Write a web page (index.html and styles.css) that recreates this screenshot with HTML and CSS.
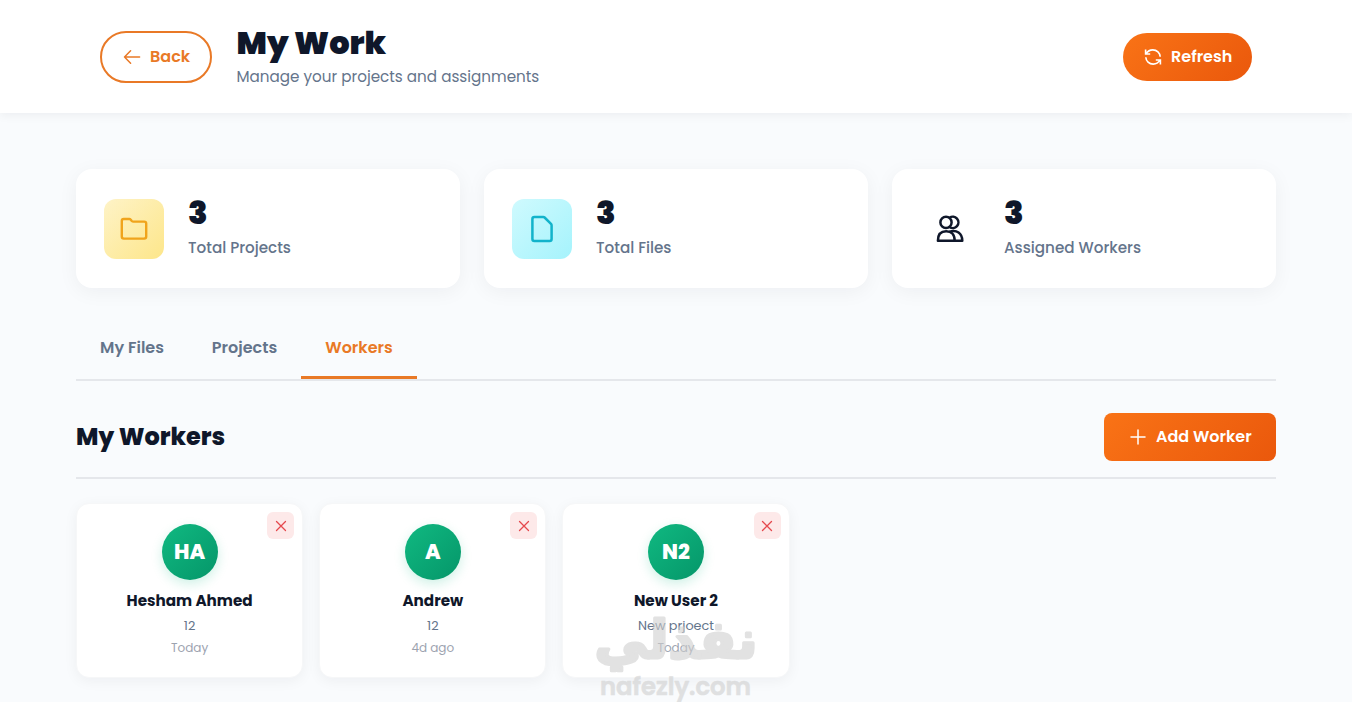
FILE: index.html
```html
<!DOCTYPE html>
<html lang="en">
<head>
  <meta charset="UTF-8">
  <meta name="viewport" content="width=device-width, initial-scale=1.0">
  <title>My Work</title>
  <link rel="stylesheet" href="styles.css">
</head>
<body>
  <header class="page-header">
    <div class="header-content">
      <div class="header-left">
        <button class="back-btn">
          <svg width="20" height="20" viewBox="0 0 20 20" fill="none" stroke="currentColor" stroke-width="1.5" stroke-linecap="round" stroke-linejoin="round"><path d="M17.6 10H2.5M8.6 3.7L2.5 10L8.6 16.3"/></svg>
          <span>Back</span>
        </button>
        <div class="header-title">
          <h1>My Work</h1>
          <p>Manage your projects and assignments</p>
        </div>
      </div>
      <button class="refresh-btn">
        <svg width="18" height="18" viewBox="0 0 18 18" fill="none" stroke="currentColor" stroke-width="1.6"><path d="M1.6 1.5V6H6.2M2 5.8C3.6 3.2 6 1.9 8.8 1.9C12.9 1.9 16 5 16.2 8.8M16.4 16.5V12H11.8M16 12.2C14.4 14.8 12 16.1 9.2 16.1C5.1 16.1 2 13 1.8 9.2"/></svg>
        <span>Refresh</span>
      </button>
    </div>
  </header>

  <main class="container">
    <section class="stats">
      <div class="stat-card">
        <div class="stat-icon projects">
          <svg width="32" height="32" viewBox="0 0 32 32" fill="none" stroke="currentColor" stroke-width="2.4" stroke-linejoin="round"><path d="M5.6 6H11.2Q12.1 6 12.8 6.8L13.8 8Q14.4 8.6 15.4 8.6H26.2Q28.2 8.6 28.2 10.6V23.6Q28.2 25.6 26.2 25.6H5.8Q3.8 25.6 3.8 23.6V8Q3.8 6 5.6 6Z"/></svg>
        </div>
        <div class="stat-info">
          <h3>3</h3>
          <p>Total Projects</p>
        </div>
      </div>
      <div class="stat-card">
        <div class="stat-icon files">
          <svg width="32" height="32" viewBox="0 0 32 32" fill="none" stroke="currentColor" stroke-width="2.5" stroke-linejoin="round"><path d="M8.4 3.9H17.2Q18 3.9 18.6 4.5L25 10.9Q25.6 11.5 25.6 12.4V25.9Q25.6 27.9 23.6 27.9H8.4Q6.4 27.9 6.4 25.9V5.9Q6.4 3.9 8.4 3.9Z"/></svg>
        </div>
        <div class="stat-info">
          <h3>3</h3>
          <p>Total Files</p>
        </div>
      </div>
      <div class="stat-card">
        <div class="stat-icon workers">
          <svg width="32" height="32" viewBox="0 0 32 32" fill="none" stroke="currentColor" stroke-width="2.5" stroke-linejoin="round"><circle cx="12" cy="9.4" r="5.6"/><path d="M15.6 4.8A5.6 5.6 0 1 1 15.6 14M3.9 27.8C3.9 21.5 7.2 18.3 12.2 18.3C17.2 18.3 20.7 21.5 20.7 27.8ZM15.5 18.7C22.5 16.4 28.3 20 28.3 27.8H20.7"/></svg>
        </div>
        <div class="stat-info">
          <h3>3</h3>
          <p>Assigned Workers</p>
        </div>
      </div>
    </section>

    <nav class="tabs">
      <button class="tab tab-files">My Files</button>
      <button class="tab tab-projects">Projects</button>
      <button class="tab tab-workers active">Workers</button>
    </nav>

    <div class="section-header">
      <h2>My Workers</h2>
      <button class="add-btn">
        <svg width="20" height="20" viewBox="0 0 20 20" fill="none" stroke="currentColor" stroke-width="1.5" stroke-linecap="round"><path d="M10 3V17M3 10H17"/></svg>
        <span>Add Worker</span>
      </button>
    </div>

    <section class="workers-grid">
      <div class="worker-card">
        <button class="remove-btn"><svg width="12" height="12" viewBox="0 0 12 12" fill="none" stroke="currentColor" stroke-width="1.3" stroke-linecap="round"><path d="M1.5 1.5L10.5 10.5M10.5 1.5L1.5 10.5"/></svg></button>
        <div class="avatar">HA</div>
        <h4>Hesham Ahmed</h4>
        <p class="role">12</p>
        <p class="date">Today</p>
      </div>
      <div class="worker-card">
        <button class="remove-btn"><svg width="12" height="12" viewBox="0 0 12 12" fill="none" stroke="currentColor" stroke-width="1.3" stroke-linecap="round"><path d="M1.5 1.5L10.5 10.5M10.5 1.5L1.5 10.5"/></svg></button>
        <div class="avatar">A</div>
        <h4>Andrew</h4>
        <p class="role">12</p>
        <p class="date">4d ago</p>
      </div>
      <div class="worker-card">
        <button class="remove-btn"><svg width="12" height="12" viewBox="0 0 12 12" fill="none" stroke="currentColor" stroke-width="1.3" stroke-linecap="round"><path d="M1.5 1.5L10.5 10.5M10.5 1.5L1.5 10.5"/></svg></button>
        <div class="avatar">N2</div>
        <h4>New User 2</h4>
        <p class="role">New prjoect</p>
        <p class="date">Today</p>
      </div>
    </section>
  </main>

  <!-- watermark -->
  <svg class="watermark" width="180" height="92" viewBox="0 0 180 92">
    <text class="mark-ar" x="90" y="48" text-anchor="middle" textLength="163" lengthAdjust="spacingAndGlyphs">نفذلي</text>
    <text class="mark-en" x="14" y="85" textLength="151" lengthAdjust="spacingAndGlyphs">nafezly.com</text>
  </svg>
</body>
</html>
```

FILE: styles.css
```css
:root {
  --primary: #f97316;
  --primary-dark: #ea580c;
  --accent: #e97926;
  --text: #0f172a;
  --muted: #64748b;
  --border: #e5e7eb;
}

* {
  margin: 0;
  padding: 0;
  box-sizing: border-box;
}

body {
  font-family: 'Poppins', 'Inter', sans-serif;
  background: #f9fbfd;
  color: var(--text);
  height: 702px;
  overflow: hidden;
}

button {
  font-family: inherit;
  border: none;
  background: none;
  cursor: pointer;
  white-space: nowrap;
}

svg {
  flex-shrink: 0;
}

/* Header */
.page-header {
  height: 113px;
  background: #fff;
  box-shadow: 0 2px 10px rgba(15, 23, 42, 0.06);
}

.header-content {
  width: 1200px;
  height: 113px;
  margin: 0 auto;
  padding: 0 24px;
  display: flex;
  justify-content: space-between;
  align-items: center;
}

.header-left {
  display: flex;
  align-items: center;
  gap: 24.5px;
}

.back-btn {
  width: 112px;
  height: 52px;
  display: flex;
  align-items: center;
  padding-left: 20px;
  gap: 8px;
  border: 2px solid var(--accent);
  border-radius: 26px;
  color: var(--accent);
  font-size: 16px;
  font-weight: 600;
}

.header-title h1 {
  font-size: 32px;
  font-weight: 900;
  line-height: 38px;
}

.header-title p {
  color: var(--muted);
  font-size: 15.2px;
  line-height: 26px;
  margin-top: 2px;
}

.refresh-btn {
  width: 129px;
  height: 48px;
  display: flex;
  align-items: center;
  padding-left: 21px;
  gap: 9px;
  border-radius: 24px;
  background: linear-gradient(135deg, var(--primary), var(--primary-dark));
  color: #fff;
  font-size: 16px;
  font-weight: 600;
}

/* Stats */
.container {
  width: 1200px;
  margin: 0 auto;
  padding-top: 56px;
}

.stats {
  display: grid;
  grid-template-columns: repeat(3, 1fr);
  gap: 24px;
}

.stat-card {
  height: 119px;
  display: flex;
  align-items: center;
  gap: 24px;
  padding: 0 28px;
  background: #fff;
  border-radius: 16px;
  box-shadow: 0 4px 20px rgba(15, 23, 42, 0.05);
}

.stat-icon {
  width: 60px;
  height: 60px;
  display: flex;
  align-items: center;
  justify-content: center;
  border-radius: 12px;
}

.stat-icon.projects {
  background: linear-gradient(135deg, #fef3c7, #fde68a);
  color: #f0a41c;
}

.stat-icon.files {
  background: linear-gradient(135deg, #cffafe, #a5f3fc);
  color: #12b3cb;
}

.stat-info h3 {
  font-size: 32px;
  font-weight: 900;
  line-height: 32px;
}

.stat-info p {
  color: var(--muted);
  font-size: 15.2px;
  font-weight: 500;
  line-height: 24px;
  margin-top: 7px;
}

/* Tabs */
.tabs {
  display: flex;
  height: 65px;
  margin-top: 28px;
  border-bottom: 2px solid var(--border);
}

.tab {
  height: 63px;
  padding-top: 3px;
  border-bottom: 3px solid transparent;
  color: var(--muted);
  font-size: 16px;
  font-weight: 600;
}

.tab-files {
  width: 112px;
}

.tab-projects {
  width: 113px;
}

.tab-workers {
  width: 116px;
}

.tab.active {
  color: var(--accent);
  border-bottom-color: var(--accent);
}

/* Workers */
.section-header {
  display: flex;
  justify-content: space-between;
  align-items: center;
  margin-top: 32px;
  padding-bottom: 16px;
  border-bottom: 2px solid var(--border);
}

.section-header h2 {
  font-size: 24px;
  font-weight: 800;
  padding-bottom: 2px;
}

.add-btn {
  width: 172px;
  height: 48px;
  display: flex;
  align-items: center;
  padding-left: 24px;
  gap: 8px;
  border-radius: 8px;
  background: linear-gradient(135deg, var(--primary), var(--primary-dark));
  color: #fff;
  font-size: 16px;
  font-weight: 600;
}

.add-btn span {
  padding-bottom: 2px;
}

.workers-grid {
  display: grid;
  grid-template-columns: repeat(5, 1fr);
  gap: 16px;
  margin-top: 24px;
}

.worker-card {
  position: relative;
  height: 175px;
  padding-top: 20px;
  background: #fff;
  border: 1px solid #f6f7f8;
  border-radius: 13px;
  box-shadow: 0 3px 14px rgba(15, 23, 42, 0.05);
  text-align: center;
}

.remove-btn {
  position: absolute;
  top: 8px;
  right: 8px;
  width: 27px;
  height: 27px;
  display: flex;
  align-items: center;
  justify-content: center;
  border-radius: 6px;
  background: #fde9e9;
  color: #e5484d;
}

.avatar {
  width: 56px;
  height: 56px;
  margin: 0 auto;
  border-radius: 50%;
  background: linear-gradient(135deg, #10b981, #059669);
  box-shadow: 0 4px 12px rgba(16, 185, 129, 0.2);
  color: #fff;
  font-size: 20.8px;
  font-weight: 800;
  line-height: 56px;
}

.worker-card h4 {
  margin-top: 10px;
  font-size: 15.2px;
  font-weight: 700;
  line-height: 22px;
}

.role {
  margin-top: 4px;
  color: var(--muted);
  font-size: 12.8px;
  line-height: 20px;
}

.date {
  margin-top: 2px;
  color: #9ca3af;
  font-size: 12px;
  line-height: 20px;
}

.watermark {
  position: absolute;
  left: 586px;
  top: 610px;
  fill: #cfcfcf;
  stroke: #cfcfcf;
  stroke-linejoin: round;
  opacity: 0.6;
  pointer-events: none;
}

.mark-ar {
  font-family: 'DejaVu Sans', sans-serif;
  font-size: 52px;
  font-weight: 700;
  stroke-width: 3px;
}

.mark-en {
  font-family: 'Poppins', sans-serif;
  font-size: 24px;
  font-weight: 600;
  stroke-width: 0.6px;
}
```
